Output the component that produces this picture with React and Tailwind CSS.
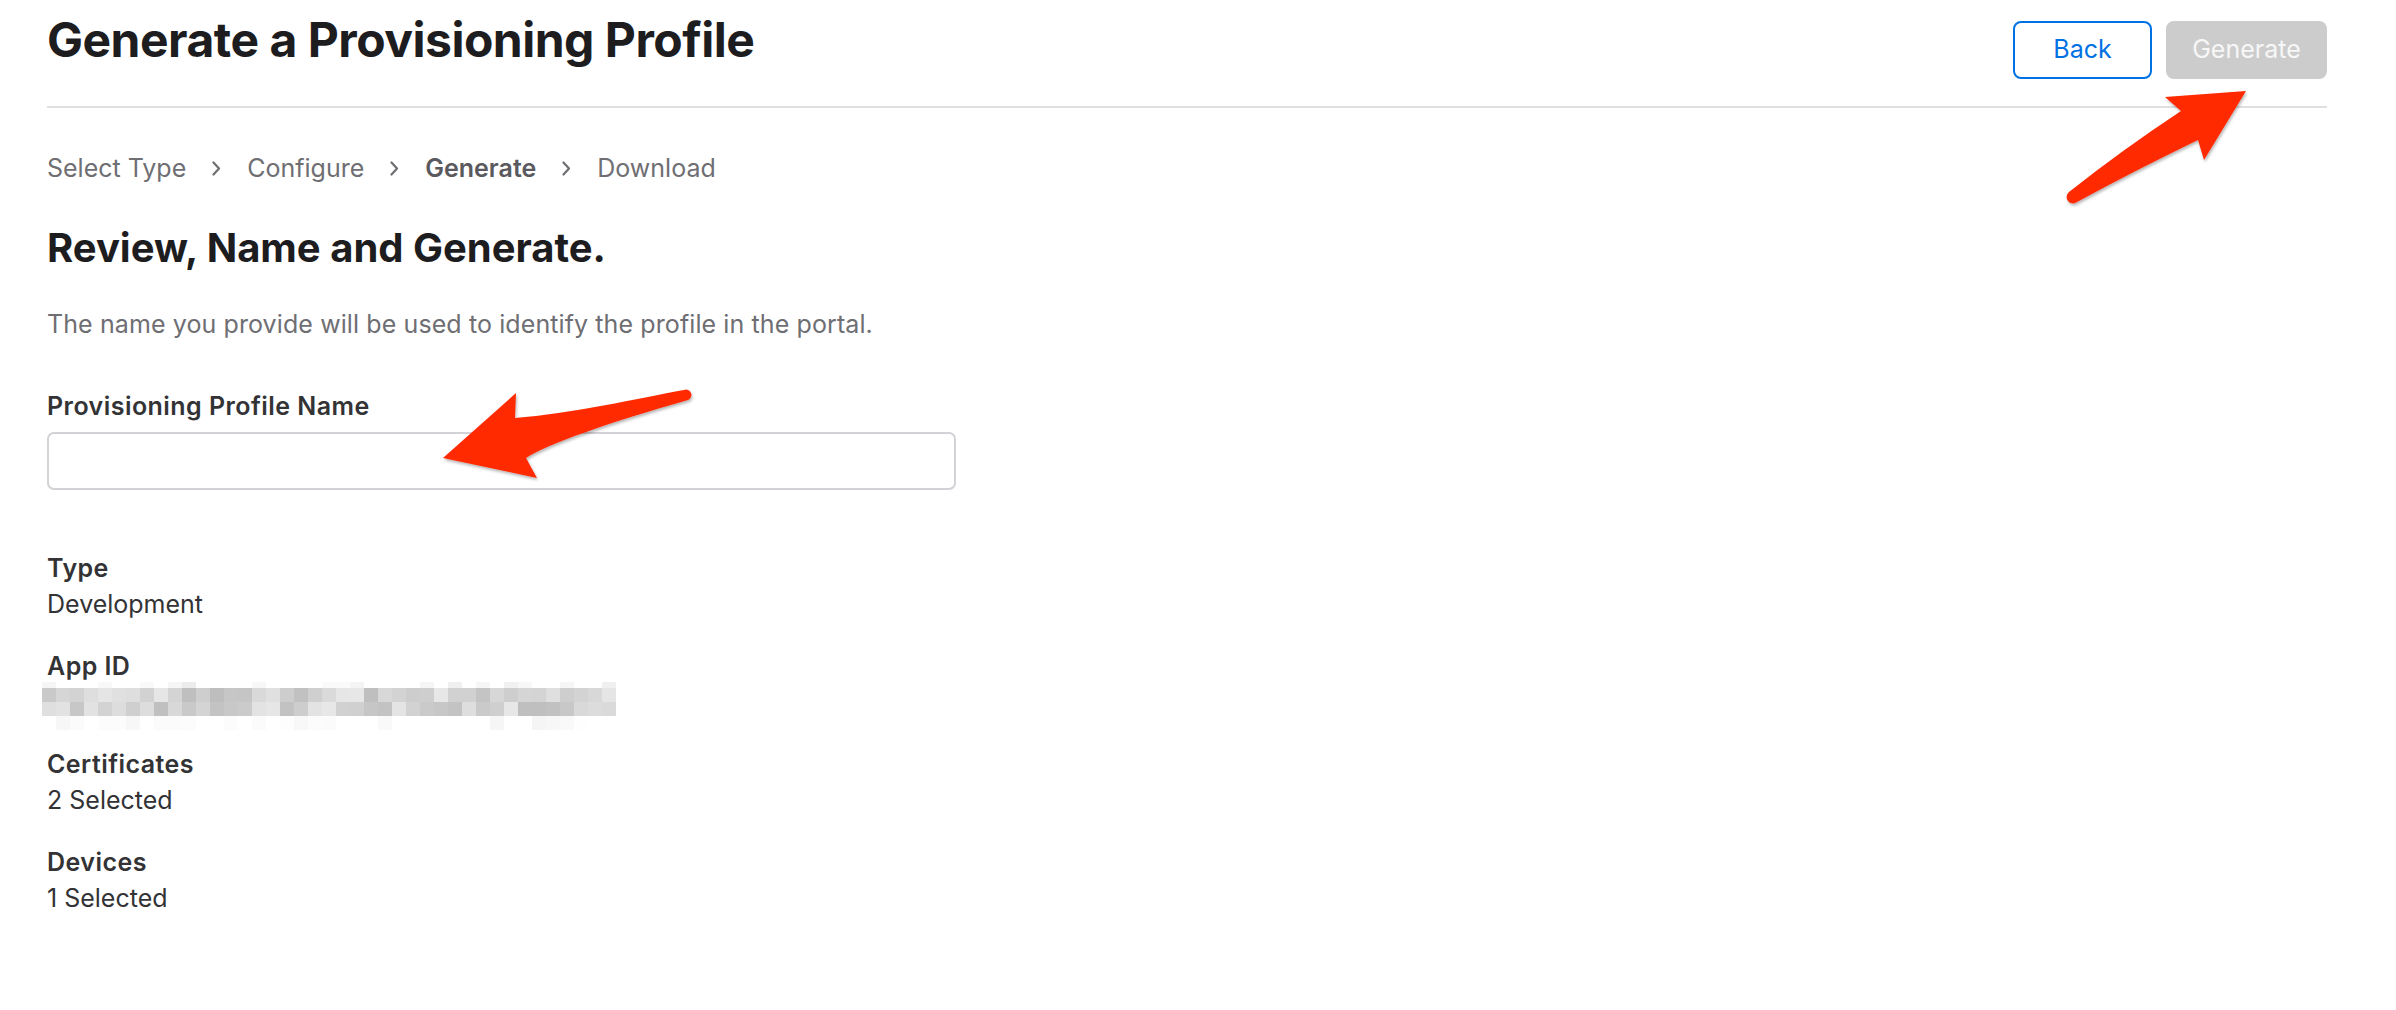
import React from 'react';

const steps = [
    { label: 'Select Type', active: false },
    { label: 'Configure', active: false },
    { label: 'Generate', active: true },
    { label: 'Download', active: false },
];

const details = [
    { label: 'Type', value: 'Development' },
    { label: 'App ID', value: null },
    { label: 'Certificates', value: '2 Selected' },
    { label: 'Devices', value: '1 Selected' },
];

// pseudo random greys for the pixelated (redacted) app id
const seeded = (n) => {
    const x = Math.sin(n * 12.9898) * 43758.5453;
    return x - Math.floor(x);
};

const blurRows = [
    { h: 6, min: 236, max: 252, faint: true },
    { h: 14, min: 190, max: 232 },
    { h: 14, min: 190, max: 232 },
    { h: 14, min: 244, max: 254, faint: true },
];

const Chevron = () => (
    <svg width="9" height="15" viewBox="0 0 9 15" className="shrink-0">
        <polyline
            points="1.5,1.5 7,7.5 1.5,13.5"
            fill="none"
            stroke="#6e6e73"
            strokeWidth="2.2"
            strokeLinecap="round"
            strokeLinejoin="round"
        />
    </svg>
);

const Pixelated = () => (
    <div className="-ml-[5px] -mt-[2px] -mb-[10px] flex flex-col">
        {blurRows.map((row, r) => (
            <div key={r} className="flex">
                {Array.from({ length: 41 }).map((_, i) => {
                    const rnd = seeded(r * 97 + i * 7 + 3);
                    let g = Math.round(row.min + rnd * (row.max - row.min));
                    if (row.faint && seeded(i * 31 + r) > 0.45) g = 255;
                    return (
                        <div
                            key={i}
                            className="w-[14px] shrink-0"
                            style={{ height: row.h, background: `rgb(${g},${g},${g})` }}
                        />
                    );
                })}
            </div>
        ))}
    </div>
);

const Arrows = () => (
    <svg
        width="2396"
        height="1010"
        viewBox="0 0 2396 1010"
        className="absolute left-0 top-0 pointer-events-none"
    >
        <defs>
            <filter id="shadow" x="-20%" y="-20%" width="140%" height="140%">
                <feDropShadow dx="1" dy="2" stdDeviation="1.6" floodColor="#000" floodOpacity="0.3" />
            </filter>
        </defs>
        <path
            d="M 2069 192 Q 2122 150 2181 111 L 2165 97 L 2246 91 L 2204 160 L 2198 140 Q 2132 172 2077 202 A 5.5 5.5 0 0 1 2069 192 Z"
            fill="#ff2a00"
            filter="url(#shadow)"
        />
        <path
            d="M 684 390 C 640 398 570 414 515 418 L 516 393 L 443 458 L 537 478 L 526 458 C 545 445 610 422 688 400 A 5 5 0 0 0 684 390 Z"
            fill="#ff2a00"
            filter="url(#shadow)"
        />
    </svg>
);

export default function App() {
    return (
        <div className="relative w-[2396px] h-[1010px] bg-white font-['Inter',sans-serif] overflow-hidden">
            <div className="ml-[47px] w-[2280px]">
                <div className="flex items-start justify-between h-[106px]">
                    <h1 className="pt-[11px] text-[48px] leading-[58px] font-bold text-[#1d1d1f] tracking-[-0.5px]">
                        Generate a Provisioning Profile
                    </h1>
                    <div className="flex gap-[14px] pt-[21px]">
                        <button className="w-[139px] h-[58px] rounded-[8px] border-2 border-[#0071e3] text-[25px] text-[#0071e3]">
                            Back
                        </button>
                        <button className="w-[161px] h-[58px] rounded-[8px] bg-[#cccccc] text-[25px] text-[#f7f7f7]">
                            Generate
                        </button>
                    </div>
                </div>
                <div className="h-[2px] bg-[#e0e0e0]" />

                <nav className="mt-[42px] flex items-center gap-[26px] text-[25px] leading-[36px] text-[#6e6e73]">
                    {steps.map((s, i) => (
                        <React.Fragment key={s.label}>
                            {i > 0 && <Chevron />}
                            <span className={s.active ? 'font-semibold text-[#5a5a5e]' : ''}>{s.label}</span>
                        </React.Fragment>
                    ))}
                </nav>

                <h2 className="mt-[38px] text-[40px] leading-[48px] font-bold text-[#1d1d1f]">
                    Review, Name and Generate.
                </h2>

                <p className="mt-[34px] text-[25px] leading-[36px] text-[#6e6e73] tracking-[0.1px]">
                    The name you provide will be used to identify the profile in the portal.
                </p>

                <label className="block mt-[46px] text-[25px] leading-[36px] font-semibold text-[#333336] tracking-[0.45px]">
                    Provisioning Profile Name
                </label>
                <input
                    type="text"
                    className="block mt-[8px] w-[909px] h-[58px] rounded-[7px] border-2 border-[#d2d2d7] px-4 text-[25px] outline-none"
                />

                <div className="mt-[60px] flex flex-col gap-[26px] text-[25px] leading-[36px] text-[#333336]">
                    {details.map((d) => (
                        <div key={d.label}>
                            <div className="font-semibold tracking-[0.45px]">{d.label}</div>
                            {d.value ? <div>{d.value}</div> : <Pixelated />}
                        </div>
                    ))}
                </div>
            </div>
            <Arrows />
        </div>
    );
}
